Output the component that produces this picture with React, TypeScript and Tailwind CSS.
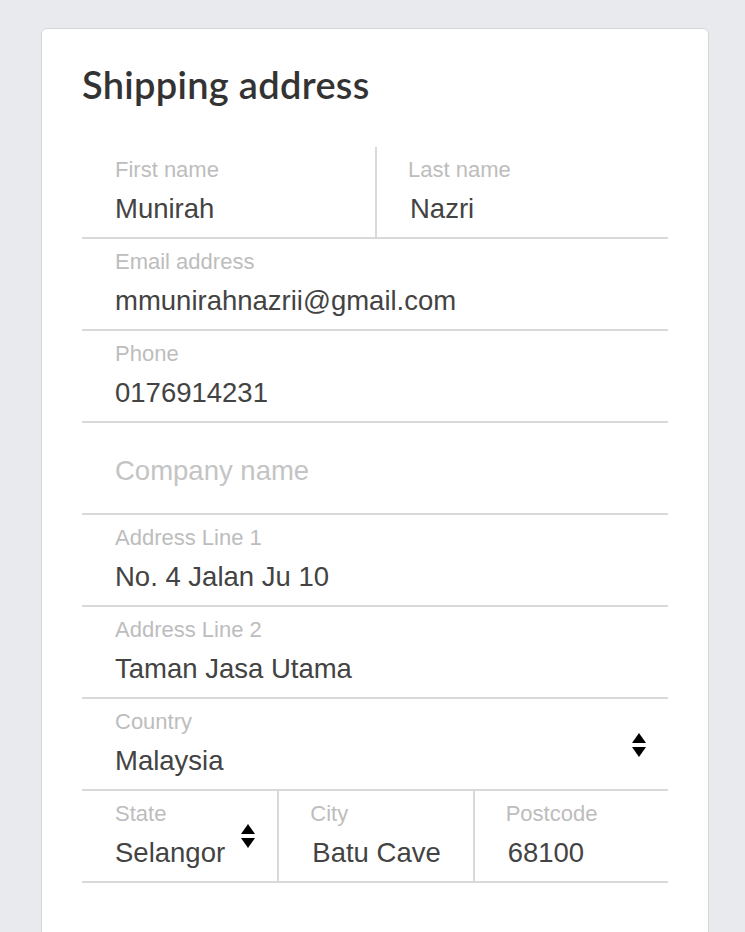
import React from "react";

type Field = {
  label?: string;
  value?: string;
  placeholder?: string;
  select?: boolean;
};

const rows: Field[][] = [
  [
    { label: "First name", value: "Munirah" },
    { label: "Last name", value: "Nazri" },
  ],
  [{ label: "Email address", value: "mmunirahnazrii@gmail.com" }],
  [{ label: "Phone", value: "0176914231" }],
  [{ placeholder: "Company name" }],
  [{ label: "Address Line 1", value: "No. 4 Jalan Ju 10" }],
  [{ label: "Address Line 2", value: "Taman Jasa Utama" }],
  [{ label: "Country", value: "Malaysia", select: true }],
  [
    { label: "State", value: "Selangor", select: true },
    { label: "City", value: "Batu Cave" },
    { label: "Postcode", value: "68100" },
  ],
];

function Stepper() {
  return (
    <svg width="16" height="26" viewBox="0 0 16 26" className="shrink-0">
      <path d="M8 1 L15 11 L1 11 Z" fill="#000" />
      <path d="M1 15 L15 15 L8 25 Z" fill="#000" />
    </svg>
  );
}

function Cell({ f, first, wide }: { f: Field; first: boolean; wide: boolean }) {
  if (f.placeholder) {
    return (
      <div className="flex-1 flex items-center pl-[33px] pt-[5px]">
        <span className="text-[27.5px] text-[#c4c4c4]">{f.placeholder}</span>
      </div>
    );
  }
  return (
    <div
      className={`flex-1 relative min-w-0 ${first ? "pl-[33px]" : "pl-[31px] border-l-2 border-[#d9d9d9]"}`}
    >
      <div className="pt-[9px] text-[22px] leading-[28px] text-[#bdbdbd]">{f.label}</div>
      <div
        className={`mt-[8px] text-[27.5px] leading-[34px] text-[#434343] whitespace-nowrap ${first ? "" : "ml-[2px]"}`}
      >
        {f.value}
      </div>
      {f.select && (
        <div
          className={`absolute ${wide ? "right-[21px] top-[33px]" : "left-[158px] top-[32px]"}`}
        >
          <Stepper />
        </div>
      )}
    </div>
  );
}

export default function App() {
  return (
    <div
      className="h-[932px] overflow-hidden bg-[#e9eaed] pt-[28px] pl-[41px]"
      style={{ fontFamily: "'Liberation Sans', Arial, sans-serif" }}
    >
      <div className="w-[668px] h-[960px] bg-white border border-[#d6d6d6] rounded-[6px] px-[40px]">
        <h2
          className="pt-[33px] text-[38px] leading-[44px] font-semibold text-[#333333] tracking-[0.3px]"
          style={{ fontFamily: "Lato, 'Open Sans', sans-serif" }}
        >
          Shipping address
        </h2>
        <div className="mt-[41px]">
          {rows.map((r, i) => (
            <div key={i} className="flex h-[92px] border-b-2 border-[#d9d9d9]">
              {r.map((f, j) => (
                <Cell key={j} f={f} first={j === 0} wide={r.length === 1} />
              ))}
            </div>
          ))}
        </div>
      </div>
    </div>
  );
}
